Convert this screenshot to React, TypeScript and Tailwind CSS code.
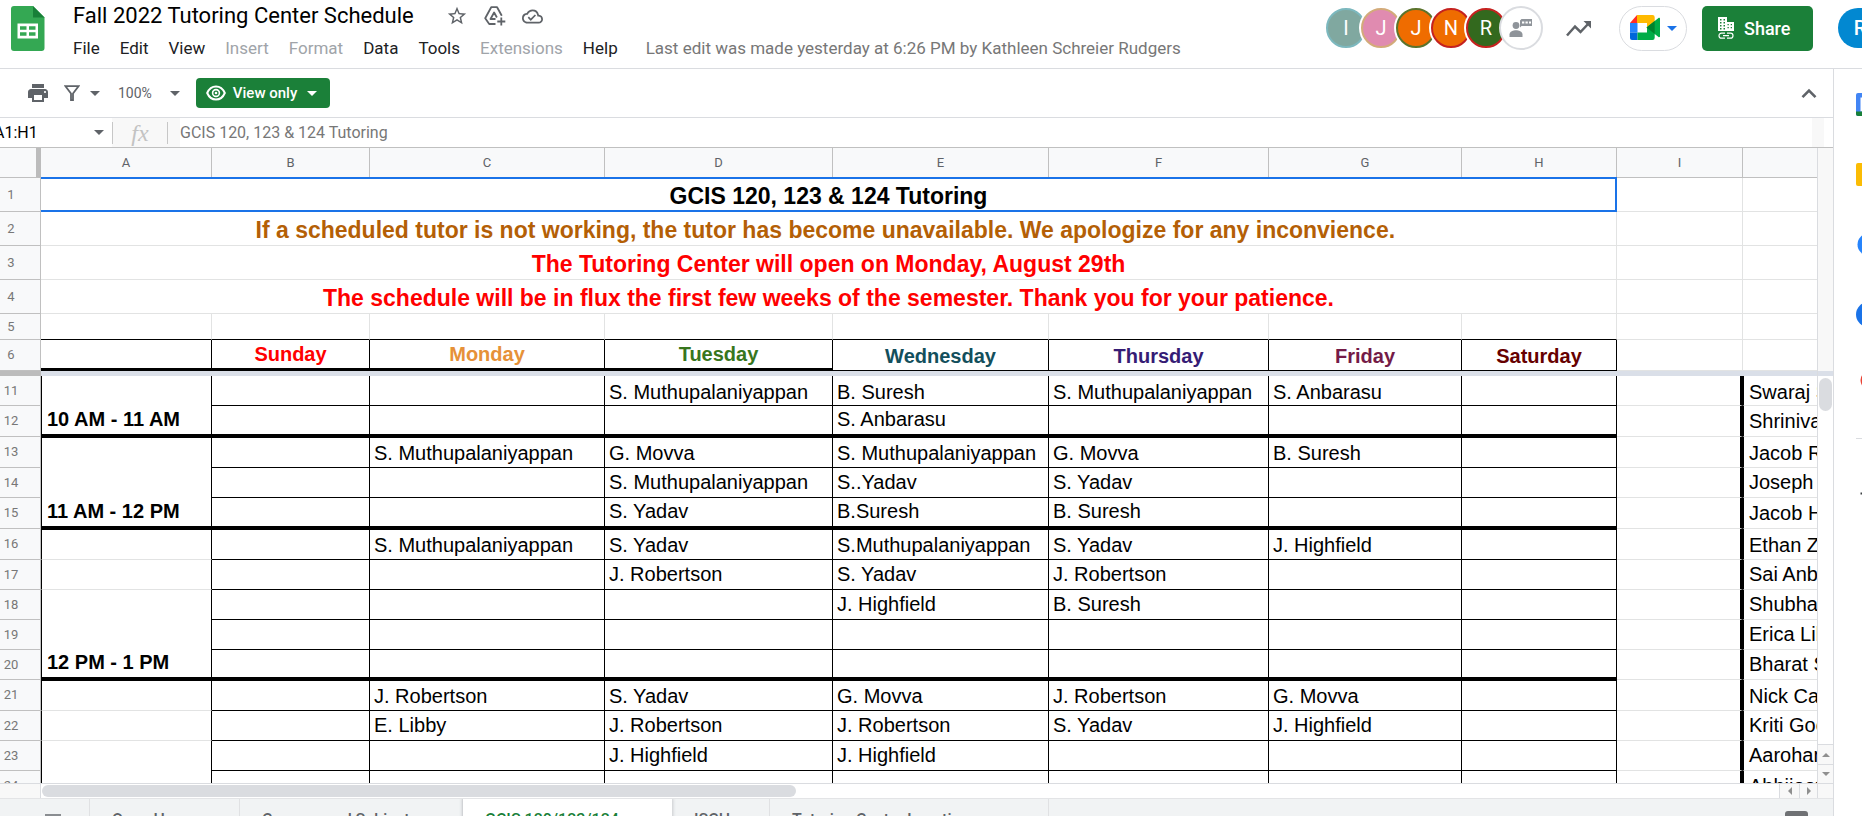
import React from "react";
import {
  MdArrowDropDown,
  MdOutlineCloudDone,
  MdPrint,
  MdStarBorder,
} from "react-icons/md";

const MENUS = [
  { label: "File" },
  { label: "Edit" },
  { label: "View" },
  { label: "Insert", disabled: true },
  { label: "Format", disabled: true },
  { label: "Data" },
  { label: "Tools" },
  { label: "Extensions", disabled: true },
  { label: "Help" },
];

const VIEWERS = [
  { letter: "I", name: "Viewer I", look: "bg-[#80a8a0] border-[#7cb8be]" },
  { letter: "J", name: "Viewer J", look: "bg-[#e08bb0] border-[#d3ab7a]" },
  { letter: "J", name: "Second viewer J", look: "bg-[#ef6c00] border-[#5b732c]" },
  { letter: "N", name: "Viewer N", look: "bg-[#ef6c00] border-[#c5221f]" },
  { letter: "R", name: "Viewer R", look: "bg-[#33691e] border-[#c5221f]" },
];

const COLUMNS = [
  { letter: "A", width: "w-[171px]" },
  { letter: "B", width: "w-[158px]" },
  { letter: "C", width: "w-[235px]" },
  { letter: "D", width: "w-[228px]" },
  { letter: "E", width: "w-[216px]" },
  { letter: "F", width: "w-[220px]" },
  { letter: "G", width: "w-[193px]" },
  { letter: "H", width: "w-[155px]" },
  { letter: "I", width: "w-[126px]" },
];

const NOTICES = [
  { row: 2, color: "text-[#b45f06]", text: "If a scheduled tutor is not working, the tutor has become unavailable. We apologize for any inconvience.\u00a0" },
  { row: 3, color: "text-[#ff0000]", text: "The Tutoring Center will open on Monday, August 29th" },
  { row: 4, color: "text-[#ff0000]", text: "The schedule will be in flux the first few weeks of the semester. Thank you for your patience." },
];

const DAYS = [
  { name: "", look: "border-b-[3px]" },
  { name: "Sunday", look: "border-b-[3px] text-[#ff0000]" },
  { name: "Monday", look: "border-b-[3px] text-[#e69138]" },
  { name: "Tuesday", look: "border-b-[3px] text-[#38761d]" },
  { name: "Wednesday", look: "border-b text-[#134f5c]" },
  { name: "Thursday", look: "border-b text-[#351c75]" },
  { name: "Friday", look: "border-b text-[#741b47]" },
  { name: "Saturday", look: "border-b text-[#660000]" },
];

type Slot = {
  row: number;
  height: string;
  label?: { text: string; span: number };
  first?: boolean;
  last?: boolean;
  cells: string[];
  tutor: string;
};

const SM = "S. Muthupalaniyappan";

const SLOTS: Slot[] = [
  { row: 11, height: "h-[30px]", label: { text: "10 AM - 11 AM", span: 2 }, cells: ["", "", SM, "B. Suresh", SM, "S. Anbarasu", ""], tutor: "Swaraj S" },
  { row: 12, height: "h-[31px]", last: true, cells: ["", "", "", "S. Anbarasu", "", "", ""], tutor: "Shrinivas" },
  { row: 13, height: "h-[31px]", first: true, label: { text: "11 AM - 12 PM", span: 3 }, cells: ["", SM, "G. Movva", SM, "G. Movva", "B. Suresh", ""], tutor: "Jacob R" },
  { row: 14, height: "h-[30px]", cells: ["", "", SM, "S..Yadav", "S. Yadav", "", ""], tutor: "Joseph" },
  { row: 15, height: "h-[31px]", last: true, cells: ["", "", "S. Yadav", "B.Suresh", "B. Suresh", "", ""], tutor: "Jacob H" },
  { row: 16, height: "h-[31px]", first: true, label: { text: "", span: 1 }, cells: ["", SM, "S. Yadav", "S.Muthupalaniyappan", "S. Yadav", "J. Highfield", ""], tutor: "Ethan Z" },
  { row: 17, height: "h-[30px]", label: { text: "", span: 1 }, cells: ["", "", "J. Robertson", "S. Yadav", "J. Robertson", "", ""], tutor: "Sai Anb" },
  { row: 18, height: "h-[30px]", label: { text: "12 PM - 1 PM", span: 3 }, cells: ["", "", "", "J. Highfield", "B. Suresh", "", ""], tutor: "Shubham" },
  { row: 19, height: "h-[30px]", cells: ["", "", "", "", "", "", ""], tutor: "Erica Libby" },
  { row: 20, height: "h-[30px]", last: true, cells: ["", "", "", "", "", "", ""], tutor: "Bharat S" },
  { row: 21, height: "h-[31px]", first: true, label: { text: "", span: 1 }, cells: ["", "J. Robertson", "S. Yadav", "G. Movva", "J. Robertson", "G. Movva", ""], tutor: "Nick Ca" },
  { row: 22, height: "h-[30px]", label: { text: "", span: 1 }, cells: ["", "E. Libby", "J. Robertson", "J. Robertson", "S. Yadav", "J. Highfield", ""], tutor: "Kriti Goel" },
  { row: 23, height: "h-[30px]", label: { text: "", span: 2 }, cells: ["", "", "J. Highfield", "J. Highfield", "", "", ""], tutor: "Aarohan" },
  { row: 24, height: "h-[31px]", cells: ["", "", "", "", "", "", ""], tutor: "Abhijeet" },
];

const TABS = [
  { label: "Open Hours", width: "w-[150px]" },
  { label: "Courses and Subjects", width: "w-[223px]" },
  { label: "GCIS 120/123/124", width: "w-[209px]", active: true },
  { label: "ISCH", width: "w-[98px]" },
  { label: "Tutoring Center Location", width: "w-[279px]" },
];

function Caret({ className }: { className: string }) {
  return (
    <svg className={className} width="10" height="5" viewBox="0 0 10 5" aria-hidden="true">
      <path d="M0 0h10L5 5z" fill="currentColor" />
    </svg>
  );
}

function SheetsLogo() {
  return (
    <svg width="34" height="45" viewBox="0 0 34 45" aria-hidden="true">
      <path d="M3 0h19l11.500 11.500V42a3 3 0 0 1-3 3H3a3 3 0 0 1-3-3V3a3 3 0 0 1 3-3z" fill="#34a853" />
      <path d="M22 0l11.500 11.500H22z" fill="#188038" />
      <path d="M6.500 17.500h20.500v15H6.500z" fill="#fff" />
      <path d="M9 20.200h6.500v3.600H9zM18 20.200h6.500v3.600H18zM9 26.200h6.500v3.600H9zM18 26.200h6.500v3.600H18z" fill="#34a853" />
    </svg>
  );
}

function DriveShortcutIcon() {
  return (
    <svg width="22" height="20" viewBox="0 0 22 20" aria-hidden="true">
      <path d="M11.500 18H5.200L1.200 12.200 7.200 1.200h5.900l4.700 8.600" fill="none" stroke="currentColor" strokeWidth="1.800" strokeLinejoin="round" />
      <path d="M11.500 13H6.500L10.100 6.500l2.800 5" fill="none" stroke="currentColor" strokeWidth="1.800" strokeLinejoin="round" />
      <path d="M17.300 11.500v8M13.300 15.500h8" fill="none" stroke="currentColor" strokeWidth="1.800" />
    </svg>
  );
}

function MeetLogo() {
  return (
    <svg width="31" height="26" viewBox="0 0 31 26" aria-hidden="true">
      <path d="M7 0v8H0z" fill="#ff2d25" />
      <path d="M0 8h7.500v9.500H0z" fill="#2684fc" />
      <path d="M0 17.500h7.500V25H2a2 2 0 0 1-2-2z" fill="#0066da" />
      <path d="M7 0h15.500A2.200 2.200 0 0 1 24.700 2.200V9L17 12V8H7z" fill="#ffba00" />
      <path d="M7.500 17.500H17V12h7.700v10.800A2.200 2.200 0 0 1 22.500 25h-15z" fill="#00ac47" />
      <path d="M16.500 12.500L28.500 3c.6-.5 1.500-.1 1.500.7v17.600c0 .8-.9 1.200-1.500.7z" fill="#00ac47" />
      <path d="M16.500 12.500l8.200-6.500v13z" fill="#00832d" />
    </svg>
  );
}

function Header() {
  return (
    <header className="flex h-[69px] shrink-0 items-start border-b border-[#dadce0] pl-[11px]">
      <a href="#home" aria-label="Sheets home" className="mt-1.5 block">
        <SheetsLogo />
      </a>
      <div className="ml-[18px] min-w-0">
        <div className="flex h-8 items-center pl-2.5">
          <h1 className="text-[22px] leading-7 text-black">Fall 2022 Tutoring Center Schedule</h1>
          <div className="ml-8 flex items-center gap-4 text-[#5f6368]">
            <button aria-label="Star"><MdStarBorder size={22} /></button>
            <button aria-label="Add shortcut to Drive"><DriveShortcutIcon /></button>
            <button aria-label="See document status"><MdOutlineCloudDone size={21} /></button>
          </div>
        </div>
        <nav aria-label="Menu bar" className="flex items-center pt-1 text-[17px] leading-6 whitespace-nowrap">
          {MENUS.map((m) => (
            <button key={m.label} disabled={m.disabled} className={`px-2.5 ${m.disabled ? "text-[#a0a4a9]" : "text-[#202124]"}`}>
              {m.label}
            </button>
          ))}
          <a href="#history" className="ml-[18px] text-[#777]">
            Last edit was made yesterday at 6:26 PM by Kathleen Schreier Rudgers
          </a>
        </nav>
      </div>
      <div className="-mr-5 ml-auto flex h-14 shrink-0 items-center">
        <div className="flex items-center">
          {VIEWERS.map((v, i) => (
            <button
              key={i}
              aria-label={v.name}
              className={`-mr-[5px] flex h-10 w-10 items-center justify-center rounded-full border-2 text-[20px] text-white ring-2 ring-white ${v.look}`}
            >
              {v.letter}
            </button>
          ))}
          <button aria-label="Show chat" className="-ml-0.5 flex h-11 w-11 items-center justify-center rounded-full border-2 border-[#dadce0] bg-white">
            <svg width="24" height="20" viewBox="0 0 24 20" aria-hidden="true">
              <circle cx="7" cy="7.500" r="3.400" fill="#8f949a" />
              <path d="M0.500 19v-2.500c0-3 4-4.200 6.500-4.200s6.500 1.200 6.500 4.200V19z" fill="#8f949a" />
              <path d="M12.500 1h10.500v7h-10.500l-1.500 1.500V2.500z" fill="#8f949a" />
              <path d="M13 3.500h2.300v2H13zM16.500 3.500h2.300v2h-2.300zM20 3.500h2v2h-2z" fill="#fff" />
            </svg>
          </button>
        </div>
        <button aria-label="Activity dashboard" className="ml-[23px] text-[#5f6368]">
          <svg width="26" height="17" viewBox="0 0 26 17" aria-hidden="true">
            <path d="M1 15.500l8-9 5.500 5.500 8.500-9" fill="none" stroke="currentColor" strokeWidth="2.500" />
            <path d="M17.500 1H25v7.500z" fill="currentColor" />
          </svg>
        </button>
        <button aria-label="Join a call" className="ml-[27px] flex h-[45px] w-[68px] items-center justify-center gap-1.5 rounded-full border border-[#dadce0]">
          <MeetLogo />
          <Caret className="text-[#1a73e8]" />
        </button>
        <button className="ml-[15px] flex h-[45px] w-[111px] items-center gap-2.5 rounded-[5px] bg-[#1b8039] pl-4 text-[18px] font-medium text-white">
          <svg width="16" height="22" viewBox="0 0 16 22" aria-hidden="true">
            <path fillRule="evenodd" d="M0 0h9v5h7v9H0zM2 2v1.500h1.500V2zM5.500 2v1.500H7V2zM2 5v1.500h1.500V5zM5.500 5v1.500H7V5zM2 8v1.500h1.500V8zM5.500 8v1.500H7V8zM2 11v1.500h1.500V11zM5.500 11v1.500H7V11zM9.500 7v1.300h1.300V7zM12.700 7v1.300H14V7zM9.500 10v1.300h1.300V10zM12.700 10v1.300H14V10z" fill="#fff" />
            <path d="M7 16.200H3.500a2.500 2.500 0 0 0 0 5H7M9 16.200h3.500a2.500 2.500 0 0 1 0 5H9M5 18.700h6" fill="none" stroke="#fff" strokeWidth="1.200" />
          </svg>
          Share
        </button>
        <button aria-label="Account" className="ml-[25px] flex h-10 w-11 items-center justify-center rounded-full bg-[#0288d1] text-[20px] font-medium text-white">
          R
        </button>
      </div>
    </header>
  );
}

function Toolbar() {
  return (
    <div role="toolbar" aria-label="Main" className="flex h-[49px] shrink-0 items-center border-b border-[#dadce0] pl-[26px] text-[14px] text-[#5f6368]">
      <button aria-label="Print"><MdPrint size={24} /></button>
      <button aria-label="Filter" className="ml-3.5 flex items-center gap-2.5">
        <svg width="16" height="16" viewBox="0 0 16 16" aria-hidden="true">
          <path d="M1.500 1.200h13L9 8.500V15H7V8.500z" fill="none" stroke="currentColor" strokeWidth="1.800" />
        </svg>
        <Caret className="" />
      </button>
      <button aria-label="Zoom" className="ml-[18px] flex items-center gap-[18px]">
        <span>100%</span>
        <Caret className="" />
      </button>
      <button className="ml-4 flex h-[30px] w-[134px] items-center rounded-[4px] bg-[#1b8039] pl-2.5 text-[15px] font-medium text-white">
        <svg width="20" height="16" viewBox="0 0 20 16" aria-hidden="true">
          <path d="M1.200 8C3 3.800 6.200 1.400 10 1.400S17 3.800 18.800 8C17 12.200 13.800 14.600 10 14.600S3 12.200 1.200 8z" fill="none" stroke="#fff" strokeWidth="2" />
          <circle cx="10" cy="8" r="3.400" fill="none" stroke="#fff" strokeWidth="1.600" />
          <circle cx="10" cy="8" r="1.300" fill="#fff" />
        </svg>
        <span className="ml-[7px]">View only</span>
        <Caret className="ml-2.5 text-white" />
      </button>
      <button aria-label="Hide the menus" className="mr-4 ml-auto">
        <svg width="16" height="11" viewBox="0 0 16 11" aria-hidden="true">
          <path d="M1.500 9.200L8 2.500l6.500 6.700" fill="none" stroke="currentColor" strokeWidth="2.600" />
        </svg>
      </button>
    </div>
  );
}

function FormulaBar() {
  return (
    <div className="flex h-[30px] shrink-0 items-center border-b border-[#c0c0c0]">
      <div className="-ml-[6px] flex w-[118px] items-center">
        <input aria-label="Name box" defaultValue="A1:H1" className="w-[100px] text-[16px] text-black outline-none" />
        <Caret className="text-[#5f6368]" />
      </div>
      <div className="flex h-full w-[68px] items-center bg-[#f8f8f8]">
        <span className="h-[22px] w-px bg-[#c7c7c7]" />
        <span className="w-[54px] text-center font-['Liberation_Serif',serif] text-[24px] leading-6 text-[#c3c3c3] italic">fx</span>
        <span className="h-[22px] w-px bg-[#c7c7c7]" />
      </div>
      <input aria-label="Formula" readOnly value="GCIS 120, 123 & 124 Tutoring" className="min-w-0 flex-1 text-[16px] leading-6 text-[#777] outline-none" />
      <span className="mr-[9px] h-full w-3 bg-[#f8f8f8]" />
    </div>
  );
}

function RowNumber({ n }: { n: number }) {
  return (
    <th scope="row" className="border-r border-b border-[#c0c0c0] bg-[#f8f9fa] pr-[18px] text-center align-middle text-[13px] leading-4 font-normal text-[#777] font-[Roboto,sans-serif]">
      {n}
    </th>
  );
}

function EmptyTail() {
  return (
    <>
      <td className="border-r border-b border-[#e2e3e3]" />
      <td className="border-b border-[#e2e3e3]" />
    </>
  );
}

function SlotRow({ slot }: { slot: Slot }) {
  const top = slot.first ? "border-t" : "";
  const bottom = slot.last ? "border-b-[3px]" : "border-b";
  const pad = slot.row === 11 ? "pb-px" : slot.first ? "pb-0.5" : "pb-[3px]";
  const endsBlock = slot.label?.text ? "border-b-[3px] border-b-black" : "border-b border-b-[#e2e3e3]";
  return (
    <tr className={slot.height}>
      <RowNumber n={slot.row} />
      {slot.label && (
        <th
          scope="rowgroup"
          rowSpan={slot.label.span}
          className={`border-r border-l border-r-black border-l-black border-t-black pb-[3px] pl-[5px] text-left align-bottom font-bold ${top} ${endsBlock}`}
        >
          {slot.label.text}
        </th>
      )}
      {slot.cells.map((c, i) => (
        <td key={i} className={`border-r border-black pl-1 align-bottom ${top} ${bottom} ${pad}`}>
          {c}
        </td>
      ))}
      <td className="border-r-[3px] border-b border-r-black border-b-[#e2e3e3]" />
      <td className={`overflow-hidden border-b border-l border-b-[#e2e3e3] border-l-black pl-[5px] align-bottom ${pad}`}>{slot.tutor}</td>
    </tr>
  );
}

function Grid() {
  return (
    <table className="w-full table-fixed border-separate border-spacing-0 font-['Liberation_Sans',Arial,sans-serif] text-[20px] leading-6 whitespace-nowrap text-black">
      <colgroup>
        <col className="w-[41px]" />
        {COLUMNS.map((c) => (
          <col key={c.letter} className={c.width} />
        ))}
        <col />
      </colgroup>
      <thead>
        <tr className="h-[30px] bg-[#f8f9fa] text-[13px] leading-4 text-[#5f6368]">
          <td className="border-r-[5px] border-b border-r-[#bcbcbc] border-b-[#c0c0c0]" />
          {COLUMNS.map((c) => (
            <th key={c.letter} scope="col" className="border-r border-b border-[#c0c0c0] font-normal font-[Roboto,sans-serif]">
              {c.letter}
            </th>
          ))}
          <td className="border-b border-[#c0c0c0]" />
        </tr>
      </thead>
      <tbody>
        <tr className="h-[34px]">
          <RowNumber n={1} />
          <td colSpan={8} className="relative border-r border-b border-[#e2e3e3] pb-px text-center align-bottom text-[23px] leading-7 font-bold">
            GCIS 120, 123 &amp; 124 Tutoring
            <span aria-hidden="true" className="absolute -top-px -right-px -bottom-px left-0 border-2 border-l-0 border-[#1a73e8]" />
          </td>
          <EmptyTail />
        </tr>
        {NOTICES.map((n) => (
          <tr key={n.row} className="h-[34px]">
            <RowNumber n={n.row} />
            <td colSpan={8} className={`border-r border-b border-[#e2e3e3] pb-px text-center align-bottom text-[23px] leading-7 font-bold ${n.color}`}>
              {n.text}
            </td>
            <EmptyTail />
          </tr>
        ))}
        <tr className="h-[26px]">
          <RowNumber n={5} />
          {DAYS.map((d, i) => (
            <td key={i} className="border-r border-b border-r-[#e2e3e3] border-b-black" />
          ))}
          <EmptyTail />
        </tr>
        <tr className="h-[31px]">
          <RowNumber n={6} />
          {DAYS.map((d, i) => (
            <th key={i} className={`border-r border-black pb-0.5 text-center align-bottom font-bold ${d.look}`}>
              {d.name}
            </th>
          ))}
          <EmptyTail />
        </tr>
        <tr aria-hidden="true" className="h-[5px]">
          <td className="bg-[#bcbcbc]" />
          <td colSpan={10} className="bg-[#dadfe8]" />
        </tr>
        {SLOTS.map((s) => (
          <SlotRow key={s.row} slot={s} />
        ))}
      </tbody>
    </table>
  );
}

function ScrollArrow({ label, d, className }: { label: string; d: string; className: string }) {
  return (
    <button aria-label={label} className={`flex items-center justify-center border-[#dadce0] bg-[#f8f8f8] ${className}`}>
      <svg width="8" height="8" viewBox="0 0 8 8" aria-hidden="true">
        <path d={d} fill="#8f8f8f" />
      </svg>
    </button>
  );
}

function SidePanel() {
  return (
    <aside aria-label="Side panel" className="flex w-[29px] shrink-0 flex-col gap-[45px] overflow-hidden border-l border-[#dadce0] pt-[23px] pl-[22px]">
      <button aria-label="Calendar" className="h-[25px] w-[25px] shrink-0">
        <svg width="25" height="25" viewBox="0 0 25 25" aria-hidden="true">
          <path d="M2 1h21v23H2a2 2 0 0 1-2-2V3a2 2 0 0 1 2-2z" fill="#4285f4" />
          <path d="M4.500 5.500h15v14h-15z" fill="#fff" />
          <path d="M0 19.500h19.500V24H2a2 2 0 0 1-2-2z" fill="#188038" />
        </svg>
      </button>
      <button aria-label="Keep" className="h-[25px] w-[25px] shrink-0">
        <svg width="25" height="25" viewBox="0 0 25 25" aria-hidden="true">
          <rect y="1" width="23" height="23" rx="2" fill="#fbbc04" />
        </svg>
      </button>
      <button aria-label="Tasks" className="h-[25px] w-[25px] shrink-0">
        <svg width="25" height="25" viewBox="0 0 25 25" aria-hidden="true">
          <circle cx="12.500" cy="12.500" r="11" fill="#2684fc" />
        </svg>
      </button>
      <button aria-label="Contacts" className="h-[25px] w-[25px] shrink-0">
        <svg width="25" height="25" viewBox="0 0 25 25" aria-hidden="true">
          <circle cx="12.500" cy="12.500" r="12.500" fill="#1a73e8" />
        </svg>
      </button>
      <button aria-label="Maps" className="h-[25px] w-[25px] shrink-0">
        <svg width="25" height="25" viewBox="0 0 25 25" aria-hidden="true">
          <path d="M12.500 0a8 8 0 0 0-8 8c0 6 8 15 8 15s8-9 8-15a8 8 0 0 0-8-8z" fill="#ea4335" />
        </svg>
      </button>
      <hr className="-mt-1 w-[25px] border-[#dadce0]" />
      <button aria-label="Get add-ons" className="h-[22px] w-[25px] shrink-0">
        <svg width="25" height="22" viewBox="0 0 25 22" aria-hidden="true">
          <path d="M4.500 9.500h16M12.500 1.500v16" stroke="#3c4043" strokeWidth="2" />
        </svg>
      </button>
    </aside>
  );
}

function SheetTabs() {
  return (
    <footer className="flex h-[18px] shrink-0 items-start overflow-hidden border-t border-[#e3e4e6] bg-[#f1f3f4] text-[16px] text-[#5f6368]">
      <button aria-label="All sheets" className="flex h-[42px] w-[90px] shrink-0 items-center border-r border-[#e0e1e3] pl-[45px]">
        <svg width="16" height="12" viewBox="0 0 16 12" aria-hidden="true">
          <path d="M0 0h16v2H0zM0 5h16v2H0zM0 10h16v2H0z" fill="#8a8d91" />
        </svg>
      </button>
      {TABS.map((t) => (
        <button
          key={t.label}
          className={`flex h-[42px] shrink-0 items-center pl-[22px] font-medium whitespace-nowrap ${t.width} ${
            t.active ? "bg-white text-[#188038] shadow-[0_0_3px_1px_#c9cbce]" : "border-r border-[#e0e1e3]"
          }`}
        >
          {t.label}
          <MdArrowDropDown className="ml-1" />
        </button>
      ))}
      <button aria-label="Explore" className="mt-3 mr-[25px] ml-auto h-7 w-[23px] shrink-0 rounded-[3px] bg-[#6f7174]" />
    </footer>
  );
}

export default function App() {
  return (
    <div className="flex h-screen flex-col overflow-hidden bg-white font-[Roboto,sans-serif]">
      <Header />
      <div className="flex min-h-0 flex-1">
        <main className="flex min-w-0 flex-1 flex-col">
          <Toolbar />
          <FormulaBar />
          <div className="flex min-h-0 flex-1">
            <div className="min-w-0 flex-1 overflow-hidden">
              <Grid />
            </div>
            <div className="flex w-4 shrink-0 flex-col border-l border-[#dadce0]">
              <div className="h-[223px] shrink-0 bg-[#f8f8f8]" />
              <div className="h-[5px] shrink-0 bg-[#dadfe8]" />
              <div className="flex-1 px-px pt-0.5">
                <div className="h-[33px] rounded-full bg-[#dadce0]" />
              </div>
              <ScrollArrow label="Scroll up" d="M0 6h8L4 2z" className="h-5 border-t" />
              <ScrollArrow label="Scroll down" d="M0 2h8L4 6z" className="h-[19px] border-t" />
            </div>
          </div>
          <div className="flex h-[15px] shrink-0 border-t border-[#dadce0]">
            <div className="w-[41px] shrink-0 border-r border-[#dadce0] bg-[#f8f8f8]" />
            <div className="flex-1 py-px pl-px">
              <div className="h-3 w-[43.4%] rounded-full bg-[#dadce0]" />
            </div>
            <ScrollArrow label="Scroll left" d="M6 0v8L2 4z" className="w-5 border-l" />
            <ScrollArrow label="Scroll right" d="M2 0v8l4-4z" className="w-[18px] border-l" />
            <div className="w-4 shrink-0 border-l border-[#dadce0] bg-[#f8f8f8]" />
          </div>
          <SheetTabs />
        </main>
        <SidePanel />
      </div>
    </div>
  );
}
